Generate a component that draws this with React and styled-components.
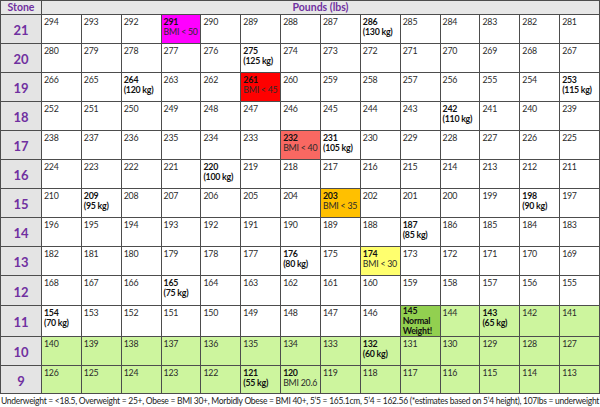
import React from "react";
import styled, { createGlobalStyle } from "styled-components";

const GlobalStyle = createGlobalStyle`
  body {
    margin: 0;
    background: #fff;
    font-family: Lato, "Open Sans", sans-serif;
  }
`;

const STONES = [21, 20, 19, 18, 17, 16, 15, 14, 13, 12, 11, 10, 9];

const KG = {
  286: 130, 275: 125, 264: 120, 253: 115, 242: 110, 231: 105, 220: 100,
  209: 95, 198: 90, 187: 85, 176: 80, 165: 75, 154: 70, 143: 65, 132: 60, 121: 55,
};

// coloured BMI markers
const MARKS = {
  291: { bg: "#ff00ff", lines: ["BMI < 50"] },
  261: { bg: "#ff0000", lines: ["BMI < 45"] },
  232: { bg: "#f96862", lines: ["BMI < 40"] },
  203: { bg: "#ffc000", lines: ["BMI < 35"] },
  174: { bg: "#ffff6e", lines: ["BMI < 30"] },
  145: { bg: "#92d050", lines: ["Normal", "Weight!"], boldAll: true },
};

const GREEN = "#cdf59e";

const describe = (lbs) => {
  const bg = lbs < 145 ? GREEN : "#fff";
  if (MARKS[lbs]) {
    const m = MARKS[lbs];
    return { bg: m.bg, bold: true, sub: m.lines, subBold: !!m.boldAll };
  }
  if (KG[lbs]) return { bg, bold: true, sub: [`(${KG[lbs]} kg)`], subBold: true };
  if (lbs === 120) return { bg, bold: true, sub: ["BMI 20.6"], subBold: false };
  return { bg, bold: false, sub: [] };
};

export default function App() {
  return (
    <>
      <GlobalStyle />
      <Grid>
        <HeadCell>Stone</HeadCell>
        <HeadCell $span>Pounds (lbs)</HeadCell>
        {STONES.map((s) => (
          <React.Fragment key={s}>
            <StoneCell>{s}</StoneCell>
            {Array.from({ length: 14 }, (_, i) => {
              const lbs = s * 14 - i;
              const d = describe(lbs);
              return (
                <Cell key={lbs} $bg={d.bg} $tight={d.sub.length > 1}>
                  <Line $bold={d.bold}>{lbs}</Line>
                  {d.sub.map((t) => (
                    <Line key={t} $bold={d.subBold}>{t}</Line>
                  ))}
                </Cell>
              );
            })}
          </React.Fragment>
        ))}
      </Grid>
      <Footer>
        Underweight = &lt;18.5, Overweight = 25+, Obese = BMI 30+, Morbidly Obese = BMI 40+, 5’5 = 165.1cm, 5’4 = 162.56 (*estimates based on 5’4 height), 107lbs = underweight
      </Footer>
    </>
  );
}

const Grid = styled.div`
  display: grid;
  grid-template-columns: 40px repeat(14, 1fr);
  grid-template-rows: 13px repeat(9, 28px) 29px 30px 28px 27px;
  gap: 1px;
  padding: 1px;
  width: 600px;
  box-sizing: border-box;
  background: #4d4d4d;
`;

const HeadCell = styled.div`
  grid-column: ${(p) => (p.$span ? "2 / span 14" : "auto")};
  background: #e7e7e7;
  color: #7030a0;
  font-weight: 700;
  font-size: 10.5px;
  line-height: 13px;
  text-align: center;
`;

const StoneCell = styled.div`
  display: flex;
  align-items: center;
  justify-content: center;
  background: #e4e4e4;
  color: #7030a0;
  font-weight: 700;
  font-size: 13px;
  padding-top: 2px;
`;

const Cell = styled.div`
  background: ${(p) => p.$bg};
  padding: ${(p) => (p.$tight ? "0" : "2px")} 0 0 2px;
  font-size: 8.8px;
  line-height: 10px;
  letter-spacing: -0.25px;
  color: #2b2b2b;
  overflow: hidden;
`;

const Line = styled.div`
  font-weight: ${(p) => (p.$bold ? 700 : 400)};
  color: ${(p) => (p.$bold ? "#111" : "inherit")};
  white-space: nowrap;
`;

const Footer = styled.div`
  font-size: 8.5px;
  line-height: 14px;
  letter-spacing: -0.28px;
  padding-left: 1px;
  color: #222;
  white-space: nowrap;
`;
